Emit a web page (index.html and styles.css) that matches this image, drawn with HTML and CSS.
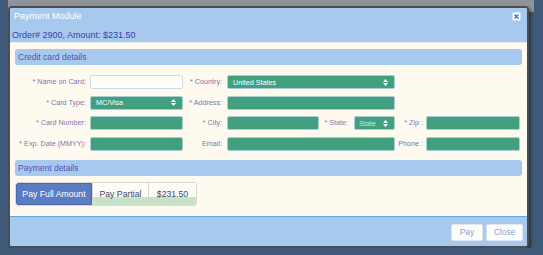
FILE: index.html
```html
<!DOCTYPE html>
<html lang="en">
<head>
<meta charset="UTF-8">
<meta name="viewport" content="width=device-width, initial-scale=1.0">
<title>Payment Module</title>
<link rel="stylesheet" href="styles.css">
</head>
<body>
<div class="backdrop">
    <div class="modal">
        <div class="modal-header">
            <div class="title-row">
                <span class="title">Payment Module</span>
                <button class="close-btn" type="button">
                    <svg width="5" height="5" viewBox="0 0 5 5"><path d="M0.5 0.5 L4.5 4.5 M4.5 0.5 L0.5 4.5" stroke="#4a6cc0" stroke-width="1.4"/></svg>
                </button>
            </div>
            <div class="order">Order# 2900, Amount: $231.50</div>
        </div>

        <div class="modal-body">
            <div class="section-title">Credit card details</div>

            <form class="card-form" action="#" method="POST">
                <!-- row 1 -->
                <label class="lbl">* Name on Card:</label>
                <input class="field empty" type="text">
                <label class="lbl">* Country:</label>
                <div class="field select">
                    <span>United States</span>
                    <svg width="5" height="7" viewBox="0 0 5 7"><path d="M0 3 L2.5 0 L5 3 Z M0 4 L2.5 7 L5 4 Z" fill="#fff"/></svg>
                </div>
                <span></span><span></span>

                <!-- row 2 -->
                <label class="lbl">* Card Type:</label>
                <div class="field select">
                    <span>MC/Visa</span>
                    <svg width="5" height="7" viewBox="0 0 5 7"><path d="M0 3 L2.5 0 L5 3 Z M0 4 L2.5 7 L5 4 Z" fill="#fff"/></svg>
                </div>
                <label class="lbl">* Address:</label>
                <input class="field" type="text">
                <span></span><span></span>

                <!-- row 3 -->
                <label class="lbl">* Card Number:</label>
                <input class="field" type="text">
                <label class="lbl">* City:</label>
                <div class="city-group">
                    <input class="field city" type="text">
                    <label class="lbl state-lbl">* State:</label>
                    <div class="field select state">
                        <span>State</span>
                        <svg width="5" height="7" viewBox="0 0 5 7"><path d="M0 3 L2.5 0 L5 3 Z M0 4 L2.5 7 L5 4 Z" fill="#fff"/></svg>
                    </div>
                </div>
                <label class="lbl short">* Zip :</label>
                <input class="field" type="text">

                <!-- row 4 -->
                <label class="lbl">* Exp. Date (MMYY):</label>
                <input class="field" type="text">
                <label class="lbl">Email:</label>
                <input class="field" type="text">
                <label class="lbl short">Phone :</label>
                <input class="field" type="text">
            </form>

            <div class="section-title">Payment details</div>

            <div class="pay-group">
                <button class="pay-opt active" type="button">Pay Full Amount</button>
                <button class="pay-opt" type="button">Pay Partial</button>
                <button class="pay-opt" type="button">$231.50</button>
            </div>
        </div>

        <div class="modal-footer">
            <button class="foot-btn" type="button">Pay</button>
            <button class="foot-btn" type="button">Close</button>
        </div>
    </div>
</div>
</body>
</html>
```

FILE: styles.css
```css
:root {
    /* colors */
    --page: #3e5a78;
    --veil: #8f9297;
    --sky: #a7c9ee;
    --cream: #fffaef;
    --ink: #4040a8;
    --label: #7878b6;
    --green: #42a07f;
    --green-edge: #a9cfd6;
    --font: "Liberation Sans", Arial, sans-serif;
}

body {
    margin: 0;
    background-color: var(--page);
    font-family: var(--font);
}

.backdrop {
    margin-left: 8px;
    width: 526px;
    padding-top: 6px;
    background: linear-gradient(var(--veil), var(--veil)) top left / 100% 12px no-repeat;
}

.modal {
    width: 517px;
    border: 2px solid #4a4d52;
    border-radius: 4px;
    background-color: var(--cream);
    box-shadow: 2px 2px 3px rgba(0, 0, 0, 0.45);
    overflow: hidden;
}

/* header */
.modal-header {
    height: 35px;
    box-sizing: border-box;
    padding: 2px 0 0 2px;
    background-color: var(--sky);
    border-bottom: 1px solid #e6eef2;
}

.title-row {
    display: flex;
    justify-content: space-between;
    align-items: flex-start;
}

.title {
    padding-left: 2px;
    font-size: 9px;
    line-height: 12px;
    color: #fff;
}

.close-btn {
    width: 9px;
    height: 9px;
    margin: 2px 6px 0 0;
    padding: 0;
    border: 1px solid #d4e2f2;
    border-radius: 2px;
    background-color: #fff;
    display: flex;
    align-items: center;
    justify-content: center;
}

.order {
    margin-top: 7px;
    font-size: 9px;
    line-height: 12px;
    color: var(--ink);
}

/* body */
.modal-body {
    padding: 6px 5px 10px 5px;
}

.section-title {
    height: 16px;
    padding-left: 3px;
    border-radius: 3px;
    background-color: var(--sky);
    color: #5252b4;
    font-size: 8.5px;
    line-height: 16px;
}

.card-form {
    display: grid;
    grid-template-columns: 75px 93px 44px 168px 31px 94px;
    grid-auto-rows: 14px;
    row-gap: 6.67px;
    margin: 10px 0 9px 0;
}

.lbl {
    padding-right: 4px;
    text-align: right;
    font-size: 7.2px;
    line-height: 14px;
    color: var(--label);
    white-space: nowrap;
}

.card-form > .lbl:nth-child(3n) {
    padding-right: 5px;
}

.lbl.short {
    padding-right: 3px;
}

.field {
    height: 14px;
    box-sizing: border-box;
    margin: 0;
    border: 1px solid var(--green-edge);
    border-radius: 2px;
    background-color: var(--green);
    font-family: var(--font);
}

.field.empty {
    background-color: #fffef9;
    border-color: #c9dcec;
}

.select {
    display: flex;
    align-items: center;
    justify-content: space-between;
    padding: 0 6px 0 5px;
    color: #fff;
    font-size: 7.2px;
}

.city-group {
    display: flex;
}

.city {
    width: 92px;
}

.state-lbl {
    width: 35px;
    box-sizing: border-box;
    padding-right: 6px;
}

.state {
    width: 41px;
    padding-left: 4px;
    color: #cfe9dc;
}

/* pay options */
.pay-group {
    display: flex;
    width: fit-content;
    height: 24px;
    box-sizing: border-box;
    margin-top: 6px;
    border: 1px solid #dbdad2;
    border-radius: 3px;
    overflow: hidden;
}

.pay-opt {
    margin: 0;
    padding: 0;
    border: none;
    border-left: 1px solid #d8d8d0;
    background: linear-gradient(#fdfcf6 0 62%, #c7e2c6 62% 100%);
    color: #3c4866;
    font-family: var(--font);
    font-size: 8.7px;
}

.pay-opt:nth-child(2) {
    width: 56px;
}

.pay-opt:nth-child(3) {
    width: 48px;
}

.pay-opt.active {
    width: 76px;
    border: 1px solid #4b66ad;
    border-radius: 2px 0 0 2px;
    background: #5b7cc3;
    color: #fff;
}

/* footer */
.modal-footer {
    display: flex;
    justify-content: flex-end;
    gap: 3px;
    padding: 7px 4px 5px 0;
    background-color: var(--sky);
    border-top: 1px solid #66a3d8;
}

.foot-btn {
    height: 17px;
    margin: 0;
    padding: 0;
    border: 1px solid #dfe7f0;
    border-radius: 2px;
    background-color: #fdfdfd;
    color: #8ea2c8;
    font-family: var(--font);
    font-size: 8.5px;
}

.foot-btn:first-child {
    width: 32px;
}

.foot-btn:last-child {
    width: 37px;
}
```
